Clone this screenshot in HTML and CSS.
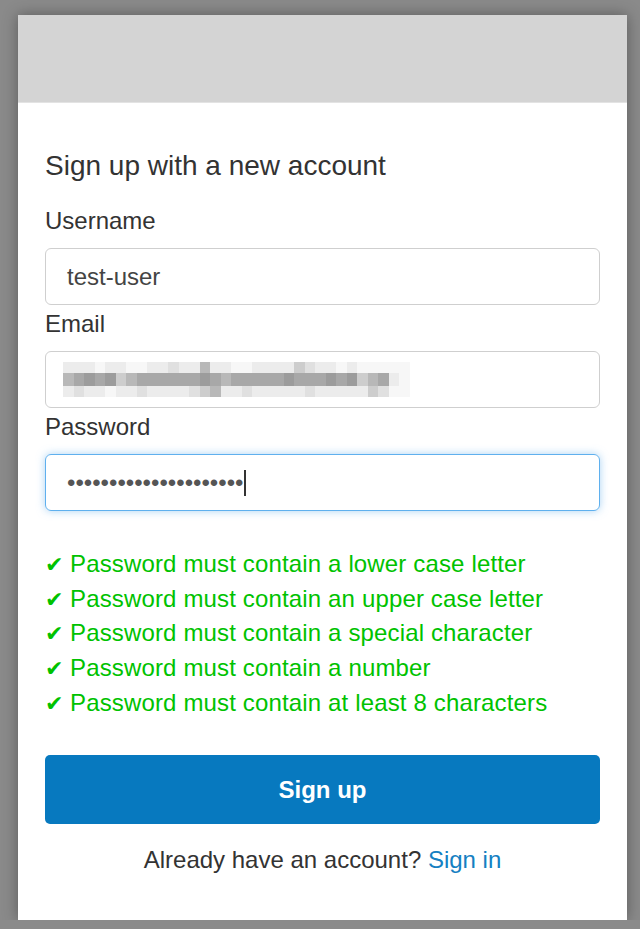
FILE: index.html
```html
<!DOCTYPE html>
<html lang="en">
<head>
<meta charset="utf-8">
<title>Sign up</title>
<link rel="stylesheet" href="styles.css">
</head>
<body>
<div class="page">
  <div class="card">
    <div class="header"></div>
    <div class="content">
      <h1 class="title">Sign up with a new account</h1>

      <label class="label">Username</label>
      <div class="field"><span class="value">test-user</span></div>

      <label class="label">Email</label>
      <div class="field">
        <div class="mosaic">
          <span class="s1"></span><span class="s1"></span><span class="s1"></span><span class="s0"></span><span class="s1"></span><span class="s1"></span><span class="s0"></span><span class="s0"></span><span class="s1"></span><span class="s1"></span><span class="s2"></span><span class="s1"></span><span class="s1"></span><span class="s4"></span><span class="s1"></span><span class="s1"></span><span class="s0"></span><span class="s0"></span><span class="s1"></span><span class="s1"></span><span class="s1"></span><span class="s1"></span><span class="s3"></span><span class="s2"></span><span class="s1"></span><span class="s1"></span><span class="s0"></span><span class="s1"></span><span class="s0"></span><span class="s0"></span><span class="s0"></span><span class="s0"></span><span class="s0"></span>
          <span class="s4"></span><span class="s5"></span><span class="s6"></span><span class="s5"></span><span class="s6"></span><span class="s3"></span><span class="s4"></span><span class="s5"></span><span class="s5"></span><span class="s5"></span><span class="s5"></span><span class="s5"></span><span class="s5"></span><span class="s6"></span><span class="s5"></span><span class="s4"></span><span class="s5"></span><span class="s5"></span><span class="s5"></span><span class="s5"></span><span class="s5"></span><span class="s6"></span><span class="s5"></span><span class="s5"></span><span class="s5"></span><span class="s6"></span><span class="s5"></span><span class="s6"></span><span class="s3"></span><span class="s4"></span><span class="s5"></span><span class="s1"></span><span class="s0"></span>
          <span class="s1"></span><span class="s2"></span><span class="s1"></span><span class="s1"></span><span class="s0"></span><span class="s1"></span><span class="s1"></span><span class="s2"></span><span class="s1"></span><span class="s1"></span><span class="s1"></span><span class="s1"></span><span class="s2"></span><span class="s3"></span><span class="s4"></span><span class="s1"></span><span class="s1"></span><span class="s2"></span><span class="s1"></span><span class="s1"></span><span class="s1"></span><span class="s1"></span><span class="s1"></span><span class="s2"></span><span class="s1"></span><span class="s1"></span><span class="s1"></span><span class="s1"></span><span class="s1"></span><span class="s3"></span><span class="s2"></span><span class="s0"></span><span class="s0"></span>
        </div>
      </div>

      <label class="label">Password</label>
      <div class="field focused"><span class="dots">•••••••••••••••••••••</span><span class="caret"></span></div>

      <ul class="rules">
        <li><span class="check">✔</span>Password must contain a lower case letter</li>
        <li><span class="check">✔</span>Password must contain an upper case letter</li>
        <li><span class="check">✔</span>Password must contain a special character</li>
        <li><span class="check">✔</span>Password must contain a number</li>
        <li><span class="check">✔</span>Password must contain at least 8 characters</li>
      </ul>

      <button class="btn" type="button">Sign up</button>

      <p class="footer">Already have an account? <a class="link" href="#">Sign in</a></p>
    </div>
  </div>
</div>
</body>
</html>
```

FILE: styles.css
```css
html, body {
  margin: 0;
  padding: 0;
}

body {
  background: #8a8a8a;
  font-family: "Liberation Sans", Arial, Helvetica, sans-serif;
  color: #333;
}

.page {
  padding: 15px 0 0 18px;
}

.card {
  width: 609px;
  height: 905px;
  background: #fff;
  box-shadow: 0 0 14px rgba(0, 0, 0, 0.35);
  display: flex;
  flex-direction: column;
}

.header {
  height: 87px;
  background: #d4d4d4;
  border-bottom: 1px solid #e3e3e3;
}

.content {
  padding: 46px 27px 0;
  display: flex;
  flex-direction: column;
}

.title {
  margin: 0 0 23px;
  font-size: 28px;
  line-height: 34px;
  font-weight: normal;
  color: #333;
}

.label {
  display: block;
  font-size: 24px;
  line-height: 29px;
  margin: 0 0 13px;
  color: #333;
}

.field {
  box-sizing: border-box;
  height: 57px;
  border: 1px solid #cfcfcf;
  border-radius: 6px;
  padding: 0 21px;
  display: flex;
  align-items: center;
  margin-bottom: 4px;
  font-size: 24px;
  line-height: 29px;
  color: #444;
}

.field.focused {
  border-color: #5fb0ee;
  box-shadow: 0 0 8px rgba(102, 175, 233, 0.55);
}

.value {
  color: #444;
}

.mosaic {
  display: grid;
  grid-template-columns: repeat(33, 10.5px);
  grid-template-rows: 11px 13px 11px;
  margin-left: -4px;
}

.s0 { background: #f7f7f7; }
.s1 { background: #ececec; }
.s2 { background: #e0e0e0; }
.s3 { background: #cdcdcd; }
.s4 { background: #b8b8b8; }
.s5 { background: #a8a8a8; }
.s6 { background: #9c9c9c; }

.dots {
  color: #555;
}

.caret {
  width: 2px;
  height: 26px;
  background: #333;
  margin-left: 1px;
}

.rules {
  list-style: none;
  margin: 32px 0 0;
  padding: 0;
  color: #00c200;
  font-size: 24px;
  line-height: 34.7px;
  letter-spacing: 0.15px;
}

.rules li {
  height: 34.7px;
  white-space: nowrap;
}

.check {
  display: inline-block;
  width: 25px;
  font-family: "DejaVu Sans", sans-serif;
  font-size: 22px;
  line-height: 0;
  vertical-align: 0;
}

.btn {
  margin-top: 35px;
  height: 69px;
  border: none;
  border-radius: 5px;
  background: #0779bf;
  color: #fff;
  font-family: "Liberation Sans", Arial, Helvetica, sans-serif;
  font-weight: bold;
  font-size: 24px;
  padding: 0;
}

.footer {
  margin: 21px 0 0;
  text-align: center;
  font-size: 24px;
  line-height: 29px;
  color: #333;
}

.link {
  color: #1580c2;
  text-decoration: none;
}
```
